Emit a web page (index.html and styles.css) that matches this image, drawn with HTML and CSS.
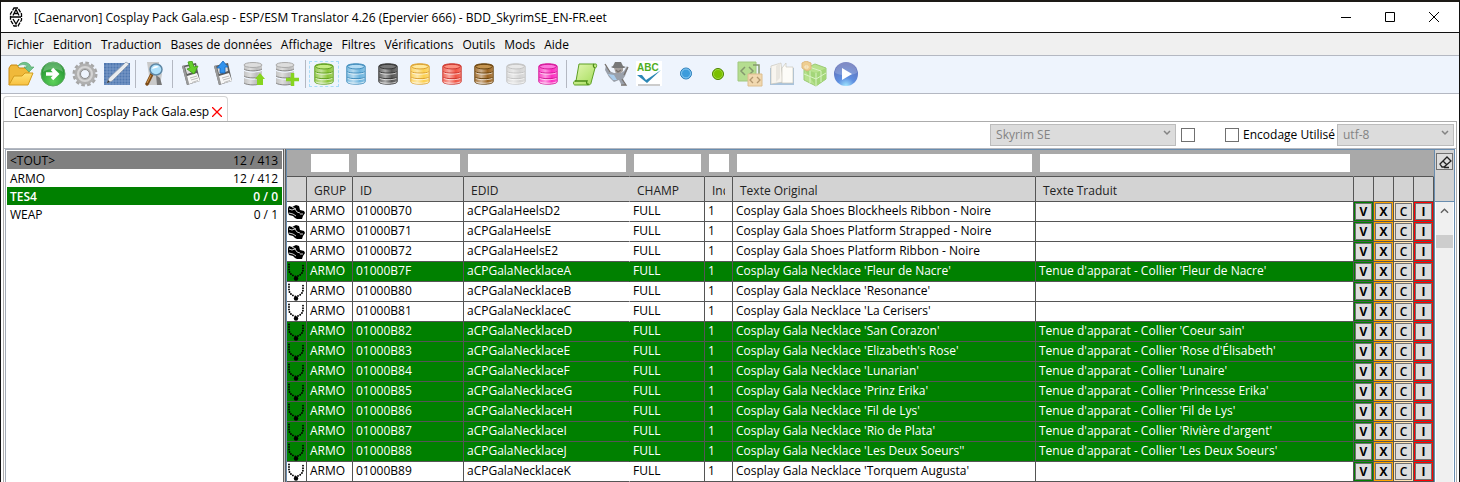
FILE: index.html
```
<!DOCTYPE html>
<html lang="fr">
  <head>
    <meta charset="UTF-8" />
    <meta name="viewport" content="width=device-width, initial-scale=1.0" />
    <title>ESP/ESM Translator</title>
    <link rel="stylesheet" href="styles.css">
  </head>
  <body>
    <svg class="defs" aria-hidden="true">
      <defs>
        <linearGradient id="shine">
          <stop offset="0" stop-color="#fff" stop-opacity="0.1" />
          <stop offset="0.35" stop-color="#fff" stop-opacity="0.5" />
          <stop offset="0.7" stop-color="#fff" stop-opacity="0" />
          <stop offset="1" stop-color="#fff" stop-opacity="0.2" />
        </linearGradient>
        <linearGradient id="gold" x2="0" y2="1">
          <stop offset="0" stop-color="#ffe477" />
          <stop offset="1" stop-color="#f8c040" />
        </linearGradient>
        <linearGradient id="leaf" x2="1" y2="1">
          <stop offset="0" stop-color="#e4f7b4" />
          <stop offset="1" stop-color="#a3dc58" />
        </linearGradient>
        <radialGradient id="greenball" cx="0.5" cy="0.8" r="0.8">
          <stop offset="0" stop-color="#5fd35b" />
          <stop offset="1" stop-color="#188a2a" />
        </radialGradient>
        <radialGradient id="blueball" cx="0.5" cy="1" r="0.9">
          <stop offset="0" stop-color="#9fe6ff" />
          <stop offset="0.4" stop-color="#5f8fe0" />
          <stop offset="1" stop-color="#5f6fb8" />
        </radialGradient>
      </defs>
      <symbol id="db" viewBox="0 0 26 26">
        <path d="M3 5v16c0 2 4 3 10 3s10-1 10-3V5c0-2-4-3-10-3S3 3 3 5z" fill="var(--c)" stroke="var(--s)" />
        <path d="M3 5v16c0 2 4 3 10 3s10-1 10-3V5z" fill="url(#shine)" />
        <ellipse cx="13" cy="5" rx="9" ry="2.5" fill="var(--t)" stroke="var(--s)" />
        <path d="M3.500 10.500c2 2 17 2 19 0M3.500 16.500c2 2 17 2 19 0" fill="none" stroke="var(--s)" />
        <path d="M4 11.700c3 2 15 2 18 0M4 17.700c3 2 15 2 18 0M4 21.500c3 2 15 2 18 0" fill="none" stroke="#fff" stroke-opacity="0.7" />
      </symbol>
      <symbol id="stack" viewBox="0 0 26 26">
        <path d="M4 4v18c2 3 16 3 18 0V4z" fill="#bdbdbd" />
        <path d="M4 4v18c2 3 16 3 18 0V4z" fill="url(#shine)" />
        <ellipse cx="13" cy="4" rx="9" ry="2.500" fill="#ddd" stroke="#aaa" />
        <path d="M4 9c3 2.500 15 2.500 18 0M4 16c3 2.500 15 2.500 18 0" fill="none" stroke="#eef4fd" stroke-width="1.500" />
        <path d="M4 8c3 2.500 15 2.500 18 0M4 15c3 2.500 15 2.500 18 0M4 22c3 2.500 15 2.500 18 0" fill="none" stroke="#888" />
      </symbol>
      <symbol id="floppy" viewBox="0 0 26 26">
        <path d="M4 5l14-3 4 18-13 4z" fill="#5b5b5b" />
        <path d="M4 5l2-.5L11 23l-2 1z" fill="#999" />
        <path d="M9 15l10-3 3 8-11 3z" fill="#f7f7f7" />
        <path d="M12 17l7-2M13 19l7-2M14 21.500l6-2" stroke="#bbb" />
        <path d="M7 6l10-2 1 6-9 3z" fill="#ddd" />
      </symbol>
      <symbol id="shoe" viewBox="0 0 18 14">
        <path d="M1 3l1-2 3 1 4-2 3 1 1 4 4 1 1 2-2 3-1 3-3 1-4-2-2-2-4-1-1-3z" />
        <path d="M2 4l3 1 3-1 2 3 3 1M5 2l4 2M2 8l4 1 3 2M13 9l3 0" fill="none" stroke="#fff" stroke-width=".8" />
      </symbol>
      <symbol id="necklace" viewBox="0 0 18 18">
        <path d="M2 1.500v5c0 4 3 6 7 7C13 12.500 16 10.500 16 6.500v-5" fill="none" stroke="#000" stroke-width="1.900" stroke-linecap="round" stroke-dasharray="0 2.520" />
        <circle cx="9" cy="15.500" r="2.200" />
      </symbol>
      <symbol id="chevron" viewBox="0 0 8 6">
        <path d="M1 1l3 3 3-3" fill="none" stroke="currentColor" stroke-width="1.500" />
      </symbol>
    </svg>

    <div class="window">
      <header class="titlebar">
        <svg class="logo" viewBox="0 0 14 20" fill="none" stroke="#000" stroke-width="1.300">
          <path d="M5 1h4l3.500 6v6L9 19H5l-3.500-6V7z" stroke-dasharray="4 1" />
          <path d="M4 8.500l3-6 3 6M5 6.500h4M2 10h10M4 12l3 5 3-5" />
        </svg>
        <h1>[Caenarvon] Cosplay Pack Gala.esp - ESP/ESM Translator 4.26 (Epervier 666) - BDD_SkyrimSE_EN-FR.eet</h1>
        <div class="winbuttons">
          <button aria-label="Réduire"><svg viewBox="0 0 10 10"><path d="M0 5.500h10" /></svg></button>
          <button aria-label="Agrandir"><svg viewBox="0 0 10 10"><path d="M.5 .5h9v9h-9z" /></svg></button>
          <button aria-label="Fermer"><svg viewBox="0 0 10 10"><path d="M0 0l10 10M10 0L0 10" /></svg></button>
        </div>
      </header>

      <nav class="menubar">
        <button>Fichier</button>
        <button>Edition</button>
        <button>Traduction</button>
        <button>Bases de données</button>
        <button>Affichage</button>
        <button>Filtres</button>
        <button>Vérifications</button>
        <button>Outils</button>
        <button>Mods</button>
        <button>Aide</button>
      </nav>

      <div class="toolbar">
        <button aria-label="Ouvrir">
          <svg viewBox="0 0 26 26">
            <path d="M1 24V7l2-3h6l2 3h10v6" fill="#f0b93a" stroke="#c98a12" />
            <path d="M1 24l5-9h8l3-3h8l-5 12z" fill="url(#gold)" stroke="#d29a1c" />
            <path d="M10 5c3-5 11-5 13 1h3l-5 5-5-5h3c-1-3-5-3-9-1z" fill="#6fc38f" stroke="#4ea35a" stroke-width=".6" />
          </svg>
        </button>
        <button aria-label="Suivant">
          <svg viewBox="0 0 26 26">
            <circle cx="13" cy="13" r="12" fill="url(#greenball)" stroke="#5da761" />
            <path d="M3 11a10 10 0 0120 0c-5-4-14-4-20 0z" fill="#fff" fill-opacity=".25" />
            <path d="M6 13h11M12 8l5 5-5 5" fill="none" stroke="#fff" stroke-width="3.500" />
          </svg>
        </button>
        <button aria-label="Options">
          <svg viewBox="0 0 26 26" fill="none">
            <circle cx="13" cy="13" r="11" stroke="#a6a6a6" stroke-width="3" stroke-dasharray="3.500 2.260" />
            <circle cx="13" cy="13" r="7.500" stroke="#b0b0b0" stroke-width="6" />
            <circle cx="13" cy="13" r="7" stroke="#d4d4d4" stroke-width="2" />
            <circle cx="13" cy="13" r="4.500" stroke="#8d8d8d" />
          </svg>
        </button>
        <button aria-label="Editer">
          <svg viewBox="0 0 26 26">
            <path d="M0 2h26v22H0z" fill="#5078b0" />
            <path d="M3 2v22M6 2v22M9 2v22M12 2v22M15 2v22M18 2v22M21 2v22M24 2v22M0 5h26M0 8h26M0 11h26M0 14h26M0 17h26M0 20h26M0 23h26" stroke="#86a4d0" stroke-width=".7" />
            <path d="M3 22l2-5L22 1l3 2L8 20z" fill="#e9ecef" stroke="#8a97a8" stroke-width=".7" />
            <path d="M3 22l1-3 2 2z" fill="#333" />
          </svg>
        </button>
        <span class="sep"></span>
        <button aria-label="Rechercher">
          <svg viewBox="0 0 26 26">
            <path d="M6 1h12v8l3 4-2 11H5l3-9z" fill="#c9c9c9" />
            <path d="M15 14l4 3 2 7h-5z" fill="#777" />
            <path d="M11 13l-5 10" stroke="#7b4a18" stroke-width="3.500" stroke-linecap="round" />
            <path d="M10 14l-4 8" stroke="#d79a4c" />
            <ellipse cx="15" cy="8.500" rx="6" ry="5.500" fill="#aee0fb" stroke="#5e87a5" stroke-width="1.500" />
            <path d="M11 8c1-3 5-4 7-2z" fill="#fff" />
          </svg>
        </button>
        <span class="sep"></span>
        <button aria-label="Enregistrer">
          <svg viewBox="0 0 26 26"><use href="#floppy" /><path d="M10 1l4-1 2 6 4-1-4 8-7-5 3-1z" fill="#64cf2b" stroke="#3d9c14" stroke-width=".8" /></svg>
        </button>
        <button aria-label="Charger">
          <svg viewBox="0 0 26 26"><use href="#floppy" /><path d="M13 0l5 6h-3v6h-5V7H7z" fill="#3293ee" stroke="#1866b8" stroke-width=".8" /></svg>
        </button>
        <button aria-label="Exporter la base">
          <svg viewBox="0 0 26 26"><use href="#stack" x="-2" /><path d="M18 12l5 6h-2v6h-6v-6h-2z" fill="#86d420" /></svg>
        </button>
        <button aria-label="Ajouter à la base">
          <svg viewBox="0 0 26 26"><use href="#stack" x="-2" /><path d="M18.500 12v13M12 18.500h13" stroke="#86d420" stroke-width="3.500" /></svg>
        </button>
        <span class="sep"></span>
        <button class="focused" aria-label="Base verte"><svg class="db green"><use href="#db" /></svg></button>
        <button aria-label="Base bleue"><svg class="db blue"><use href="#db" /></svg></button>
        <button aria-label="Base noire"><svg class="db black"><use href="#db" /></svg></button>
        <button aria-label="Base jaune"><svg class="db yellow"><use href="#db" /></svg></button>
        <button aria-label="Base rouge"><svg class="db red"><use href="#db" /></svg></button>
        <button aria-label="Base marron"><svg class="db brown"><use href="#db" /></svg></button>
        <button aria-label="Base grise"><svg class="db grey"><use href="#db" /></svg></button>
        <button aria-label="Base rose"><svg class="db pink"><use href="#db" /></svg></button>
        <span class="sep"></span>
        <button aria-label="Script">
          <svg viewBox="0 0 26 26">
            <path d="M7 3h17c1 0 1 4-1 4l-4 15c0 1-1 2-3 2H3c-2 0-2-4 0-4h1z" fill="url(#leaf)" stroke="#5d9f24" />
            <path d="M3 20h12c-1 2 0 4 2 3M22 3c-1 1-1 3 1 4" fill="none" stroke="#4b8c17" stroke-width="1.300" />
          </svg>
        </button>
        <button aria-label="Espion">
          <svg viewBox="0 0 26 26">
            <path d="M9 5l2-4h6l2 4 3 1-2 1H9L7 6z" fill="#777" />
            <path d="M10 7h9v3l-3 3h-4z" fill="#a59f9c" />
            <path d="M2 4l3 6 5 2h7l3-2 3-5 1 2-3 8-2 3 2 6-4-1-2-4-5 2-5-5-4-7z" fill="#9aa0aa" />
            <path d="M4 13l5 6 4 0-3-5z" fill="#a9ccec" />
            <path d="M12 9l2 2 3-2M1 3l5 8M24 6l-4 8M18 18l4 6h-5" fill="none" stroke="#77716d" stroke-width="1.300" />
          </svg>
        </button>
        <button aria-label="Orthographe">
          <svg viewBox="0 0 26 26">
            <path d="M0 0h26v25H0z" fill="#fff" />
            <text class="abc" x="1" y="10">ABC</text>
            <path d="M1 14l5 0 4 5L25 9 11 22z" fill="#2c87b5" />
            <path d="M2 24h22" stroke="#999" />
          </svg>
        </button>
        <span class="sep blank"></span>
        <button aria-label="Bleu"><svg viewBox="0 0 26 26"><circle cx="13" cy="12.500" r="5.500" fill="#3c9cdc" stroke="#2a7cb8" /><circle cx="13" cy="12.500" r="4.500" fill="none" stroke="#8ccaf2" /></svg></button>
        <button aria-label="Vert"><svg viewBox="0 0 26 26"><circle cx="13" cy="13" r="5.500" fill="#7cc000" stroke="#4c8200" /><circle cx="13" cy="13" r="4.500" fill="none" stroke="#9cd838" /></svg></button>
        <button aria-label="Comparer">
          <svg viewBox="0 0 26 26" opacity=".75">
            <path d="M1 1h18v19H1z" fill="#a3d66c" stroke="#87b955" />
            <path d="M8 6l-4 4 4 4M12 6l4 4-4 4M16 4h6v9" fill="none" stroke="#61793f" stroke-width="1.500" />
            <path d="M11 13h14v12H11z" fill="#f3cf96" stroke="#d8ac6a" />
            <path d="M16 16l-3 3 3 3M20 16l3 3-3 3" fill="none" stroke="#a17a40" stroke-width="1.300" />
          </svg>
        </button>
        <button aria-label="Dictionnaire">
          <svg viewBox="0 0 26 26">
            <path d="M1 7h24v17H1z" fill="#a9c3dc" />
            <path d="M2 5l10-3 2 19-12 2z" fill="#f8f5ef" stroke="#c9c5bc" stroke-width=".7" />
            <path d="M13 21V7l4-5v4h7v16H13z" fill="#fdfcf8" stroke="#c9c5bc" stroke-width=".7" />
            <path d="M7 5l4-3v15l-4 4z" fill="#e9e6df" />
          </svg>
        </button>
        <button aria-label="Paquet">
          <svg viewBox="0 0 26 26" opacity=".75">
            <path d="M3 8l11-5 11 4v11l-10 7-12-6z" fill="#a5dc68" stroke="#80bd48" />
            <path d="M3 8l12 4 10-5v11l-10 7z" fill="#8bcd4d" />
            <path d="M15 12v13M3 13l12 5 10-6M9 10v12M20 10v11M8 6l12 4" fill="none" stroke="#d4f3b3" />
            <path d="M1 2l4-2 5 2v6l-4 2-5-3z" fill="#efc16e" stroke="#d8a657" />
            <path d="M4 5h3v2H4z" fill="none" stroke="#fbe8bd" />
          </svg>
        </button>
        <button aria-label="Lancer">
          <svg viewBox="0 0 26 26">
            <circle cx="13" cy="13" r="12" fill="url(#blueball)" />
            <path d="M2 12a11 11 0 0122 0c-7 3-15 3-22 0z" fill="#fff" fill-opacity=".2" />
            <path d="M9 7l10 6-10 6z" fill="#fff" />
          </svg>
        </button>
      </div>

      <div class="tabs">
        <div class="tab">
          <span>[Caenarvon] Cosplay Pack Gala.esp</span>
          <button aria-label="Fermer l'onglet"><svg viewBox="0 0 10 10"><path d="M0 0l10 10M10 0L0 10" /></svg></button>
        </div>
      </div>

      <main class="panel">
        <div class="options">
          <div class="combo game">
            <select aria-label="Jeu" disabled><option>Skyrim SE</option></select>
            <svg><use href="#chevron" /></svg>
          </div>
          <input type="checkbox" aria-label="Changer de jeu">
          <label class="encoding"><input type="checkbox">Encodage Utilisé</label>
          <div class="combo charset">
            <select aria-label="Encodage" disabled><option>utf-8</option></select>
            <svg><use href="#chevron" /></svg>
          </div>
        </div>

        <div class="content">
          <ul class="groups">
            <li class="all"><span>&lt;TOUT&gt;</span><span>12 / 413</span></li>
            <li><span>ARMO</span><span>12 / 412</span></li>
            <li class="done"><span>TES4</span><span>0 / 0</span></li>
            <li><span>WEAP</span><span>0 / 1</span></li>
          </ul>
          <div class="splitter"></div>
          <div class="grid">
            <table>
              <colgroup>
                <col class="c-icon"><col class="c-grup"><col class="c-id"><col class="c-edid"><col class="c-champ"><col class="c-ind"><col class="c-orig"><col class="c-trad"><col class="c-btn"><col class="c-btn"><col class="c-btn"><col class="c-btn">
              </colgroup>
              <thead>
                <tr class="filters">
                  <td></td>
                  <td><input type="text" aria-label="Filtre GRUP"></td>
                  <td><input type="text" aria-label="Filtre ID"></td>
                  <td><input type="text" aria-label="Filtre EDID"></td>
                  <td><input type="text" aria-label="Filtre CHAMP"></td>
                  <td><input type="text" aria-label="Filtre Index"></td>
                  <td><input type="text" aria-label="Filtre texte original"></td>
                  <td><input type="text" aria-label="Filtre texte traduit"></td>
                  <td colspan="4"></td>
                </tr>
                <tr class="heads">
                  <th></th>
                  <th>GRUP</th>
                  <th>ID</th>
                  <th class="open">EDID</th>
                  <th>CHAMP</th>
                  <th><div class="clip">Ind</div></th>
                  <th>Texte Original</th>
                  <th>Texte Traduit</th>
                  <th></th>
                  <th></th>
                  <th></th>
                  <th></th>
                </tr>
              </thead>
              <tbody></tbody>
            </table>
            <div class="side">
              <div class="corner">
                <button aria-label="Effacer les filtres">
                  <svg viewBox="0 0 14 14" fill="none" stroke="#222" stroke-width="1.300"><path d="M2 9l7-7 4 4-7 6H4zM5 6l4 4M6 12.500h5" /></svg>
                </button>
              </div>
              <div class="scrollbar">
                <button aria-label="Défiler vers le haut"><svg viewBox="0 0 10 6"><path d="M1 5l4-4 4 4" /></svg></button>
                <div class="thumb"></div>
              </div>
            </div>
          </div>
        </div>
      </main>
    </div>

    <script>
      const rows = [
        ["70", "HeelsD2", "Shoes Blockheels Ribbon - Noire"],
        ["71", "HeelsE", "Shoes Platform Strapped - Noire"],
        ["72", "HeelsE2", "Shoes Platform Ribbon - Noire"],
        ["7F", "NecklaceA", "Necklace 'Fleur de Nacre'", "Fleur de Nacre"],
        ["80", "NecklaceB", "Necklace 'Resonance'"],
        ["81", "NecklaceC", "Necklace 'La Cerisers'"],
        ["82", "NecklaceD", "Necklace 'San Corazon'", "Coeur sain"],
        ["83", "NecklaceE", "Necklace 'Elizabeth's Rose'", "Rose d'Élisabeth"],
        ["84", "NecklaceF", "Necklace 'Lunarian'", "Lunaire"],
        ["85", "NecklaceG", "Necklace 'Prinz Erika'", "Princesse Erika"],
        ["86", "NecklaceH", "Necklace 'Fil de Lys'", "Fil de Lys"],
        ["87", "NecklaceI", "Necklace 'Rio de Plata'", "Rivière d'argent"],
        ["88", "NecklaceJ", "Necklace 'Les Deux Soeurs''", "Les Deux Soeurs"],
        ["89", "NecklaceK", "Necklace 'Torquem Augusta'"],
      ];
      const tbody = document.querySelector("tbody");
      rows.forEach(([id, edid, original, translated]) => {
        const tr = document.createElement("tr");
        const icon = edid.startsWith("Heels") ? "shoe" : "necklace";
        if (translated) tr.classList.add("done");
        tr.innerHTML = `
          <td class="icon"><svg class="${icon}"><use href="#${icon}" /></svg></td>
          <td>ARMO</td>
          <td>01000B${id}</td>
          <td class="open">aCPGala${edid}</td>
          <td>FULL</td>
          <td>1</td>
          <td>Cosplay Gala ${original}</td>
          <td>${translated ? `Tenue d'apparat - Collier '${translated}'` : ""}</td>
          <td class="act v"><button>V</button></td>
          <td class="act x"><button>X</button></td>
          <td class="act c"><button>C</button></td>
          <td class="act i"><button>I</button></td>`;
        tbody.append(tr);
      });
    </script>
  </body>
</html>
```
FILE: styles.css
```
* {
  margin: 0;
  padding: 0;
  box-sizing: border-box;
}
body {
  font-family: "Open Sans", "Noto Sans", sans-serif;
  font-size: 12px;
  line-height: 16px;
  color: #000;
  background: #fff;
  overflow: hidden;
}
button,
input,
select {
  font: inherit;
  color: inherit;
  border: 0;
  background: none;
}
svg {
  display: block;
}
.defs {
  position: absolute;
  width: 0;
  height: 0;
}
.window {
  min-height: 100vh;
  border: 1px solid #111;
  border-top: 2px solid #1d1a16;
  border-bottom: 0;
}

/* title bar */
.titlebar {
  display: flex;
  align-items: center;
  height: 31px;
  padding: 0 3px 0 8px;
  border-bottom: 1px solid #111;
}
.logo {
  width: 14px;
  height: 20px;
  margin-right: 11px;
}
h1 {
  flex: 1;
  padding-top: 2px;
  font-size: 12px;
  font-weight: 400;
}
.winbuttons {
  display: flex;
}
.winbuttons button {
  display: grid;
  place-content: center;
  width: 44px;
  height: 30px;
}
.winbuttons svg {
  width: 10px;
  height: 10px;
  fill: none;
  stroke: #000;
}

/* menu */
.menubar {
  display: flex;
  gap: 9px;
  height: 23px;
  padding: 2px 0 0 6px;
  background: #f0f0f0;
  border-bottom: 1px solid #b4b8c2;
}

/* toolbar */
.toolbar {
  display: flex;
  align-items: center;
  height: 38px;
  padding: 0 0 2px 4px;
  background: #eef4fd;
  border-bottom: 1px solid #b4b8c2;
}
.toolbar button {
  display: grid;
  place-content: center;
  width: 32px;
  height: 28px;
}
.toolbar button.focused {
  outline: 1px dashed #a9dcf8;
  outline-offset: -2px;
}
.toolbar svg {
  width: 26px;
  height: 26px;
}
.toolbar .db {
  width: 24px;
}
.sep {
  width: 1px;
  height: 28px;
  margin: 0 2px;
  background: #b4b8c2;
}
.sep.blank {
  background: none;
}
.abc {
  font: bold 10px "Liberation Sans", sans-serif;
  fill: #4fae1e;
}
.green { --c: #8cc63a; --t: #c6ec84; --s: #5c9c1c; }
.blue { --c: #6cb4de; --t: #b4dcf4; --s: #3c88b8; }
.black { --c: #555; --t: #777; --s: #333; }
.yellow { --c: #fcd050; --t: #ffe89c; --s: #d89c2c; }
.red { --c: #f05444; --t: #fc9080; --s: #c8342c; }
.brown { --c: #9c6420; --t: #c49450; --s: #64400c; }
.grey { --c: #d4d4d4; --t: #e8e8e8; --s: #c0c0c0; }
.pink { --c: #fc2cc0; --t: #fc78dc; --s: #d01494; }

/* tabs */
.tabs {
  display: flex;
  height: 27px;
  padding: 2px 2px 0;
}
.tab {
  display: flex;
  align-items: center;
  gap: 3px;
  padding: 5px 5px 0 10px;
  border: 1px solid #d4d4d4;
  border-bottom: 0;
  border-radius: 4px 4px 0 0;
}
.tab svg {
  width: 10px;
  height: 10px;
  stroke: #f00;
  stroke-width: 1.3;
}

/* options */
.panel {
  margin: 0 2px;
  border: 1px solid #acacac;
  border-bottom: 0;
}
.options {
  display: flex;
  align-items: center;
  justify-content: flex-end;
  height: 26px;
  padding-right: 2px;
}
.combo {
  display: grid;
  align-items: center;
  color: #838383;
}
.combo select,
.combo svg {
  grid-area: 1 / 1;
}
.combo select {
  appearance: none;
  height: 22px;
  padding: 0 5px;
  color: #838383;
  background: #dcdcdc;
  border: 1px solid #bcbcbc;
  opacity: 1;
}
.combo svg {
  justify-self: end;
  width: 8px;
  height: 6px;
  margin: 0 5px 4px 0;
}
.game {
  width: 186px;
  margin-right: 5px;
}
.charset {
  width: 117px;
}
input[type="checkbox"] {
  appearance: none;
  width: 14px;
  height: 14px;
  background: #fff;
  border: 1px solid #707070;
}
.encoding {
  display: flex;
  align-items: center;
  gap: 4px;
  margin: 0 2px 0 30px;
}

/* groups list */
.content {
  display: flex;
  padding: 0 1px;
  border-top: 1px solid #b4b8c0;
}
.groups {
  width: 278px;
  padding: 1px 1px 0;
  border: 1px solid #a4acb8;
  border-width: 1px 0 0 1px;
  list-style: none;
}
.groups li {
  display: flex;
  justify-content: space-between;
  height: 18px;
  padding: 2px 4px 0 3px;
}
.groups .all {
  background: #808080;
}
.groups .done {
  color: #fff;
  font-weight: 600;
  background: #008000;
}
.splitter {
  width: 3px;
  background: #c8c8c8;
  border: 1px solid #606060;
  border-width: 0 1px;
}

/* string grid */
.grid {
  display: flex;
  flex: 1;
  min-width: 0;
  border: 1px solid #688caf;
  border-bottom: 0;
}
table {
  flex: 1;
  width: 0;
  table-layout: fixed;
  border-collapse: separate;
  border-spacing: 0;
}
.c-icon { width: 20px; }
.c-grup { width: 46px; }
.c-id { width: 111px; }
.c-edid { width: 166px; }
.c-champ { width: 75px; }
.c-ind { width: 28px; }
.c-orig { width: 303px; }
.c-btn { width: 20px; }
td,
th {
  height: 20px;
  padding: 0 3px;
  font-weight: 400;
  text-align: left;
  white-space: nowrap;
  overflow: hidden;
  border: 1px solid #555;
  border-width: 0 1px 1px 0;
}
.open {
  border-right-color: transparent;
}
.filters td {
  height: 27px;
  padding: 0 3px 0 4px;
  background: #a9a9a9;
  border-right-color: #a9a9a9;
}
.filters input {
  display: block;
  width: 100%;
  height: 18px;
  background: #fff;
}
.heads th {
  height: 25px;
  padding: 4px 7px 0;
  color: #222;
  background: #d3d3d3;
}
.heads .open {
  border-right-color: #d3d3d3;
}
.clip {
  overflow: hidden;
}
tbody tr {
  background: #fff;
}
tbody td {
  padding-bottom: 2px;
}
tbody .done {
  color: #fff;
  font-weight: 500;
  background: #008000;
}
.done td {
  font-weight: inherit;
}
tbody .icon {
  padding: 0;
}
.shoe {
  width: 18px;
  height: 14px;
}
.necklace {
  width: 18px;
  height: 18px;
}
tbody .act {
  padding: 1px;
}
.act button {
  display: block;
  width: 100%;
  height: 17px;
  line-height: 15px;
  font-weight: 700;
  color: #000;
  background: #ddd;
  border: 1px solid #707070;
}
.v { background: #008000; }
.x { background: #ffa500; }
.c { background: #ffe4b5; }
.i { background: #f00; }
.act.c button {
  font-weight: 600;
}

.side {
  display: flex;
  flex-direction: column;
  width: 20px;
  border-left: 1px solid #688caf;
}
.corner {
  height: 52px;
  padding: 3px 1px;
  background: #d3d3d3;
  border-bottom: 1px solid #688caf;
}
.corner button {
  display: grid;
  place-content: center;
  width: 17px;
  height: 17px;
  background: #ddd;
  border: 1px solid #707070;
}
.corner svg {
  width: 14px;
  height: 14px;
}
.scrollbar {
  flex: 1;
  margin: 0 1px;
  background: #f0f0f0;
}
.scrollbar button {
  display: grid;
  place-content: center;
  width: 17px;
  height: 17px;
  margin-bottom: 16px;
}
.scrollbar svg {
  width: 9px;
  height: 6px;
  fill: none;
  stroke: #606060;
  stroke-width: 1.5;
}
.thumb {
  height: 13px;
  background: #cdcdcd;
}
```
